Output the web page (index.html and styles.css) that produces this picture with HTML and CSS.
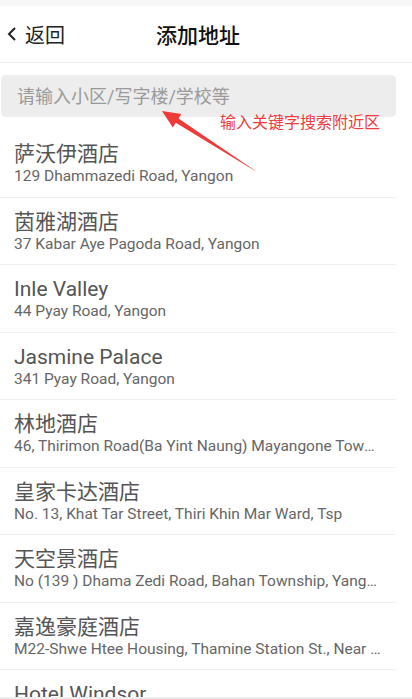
FILE: index.html
```html
<!DOCTYPE html>
<html lang="zh-CN">

<head>
    <meta charset="UTF-8">
    <meta name="viewport" content="width=device-width, initial-scale=1.0">
    <title>添加地址</title>
    <link rel="stylesheet" href="styles.css">
</head>

<body>
    <div class="page">
        <div class="status"></div>
        <!-- 顶部导航 -->
        <div class="header">
            <a class="back" href="#">
                <svg width="12" height="16" viewBox="0 0 12 16"><polyline points="9,2 3,8 9,14" fill="none" stroke="#222" stroke-width="2"/></svg>
                <span>返回</span>
            </a>
            <h1 class="title">添加地址</h1>
        </div>

        <!-- 搜索框 -->
        <div class="search">
            <input type="text" placeholder="请输入小区/写字楼/学校等">
        </div>

        <!-- 地址列表 -->
        <ul class="list">
            <li>
                <p class="name">萨沃伊酒店</p>
                <p class="addr">129 Dhammazedi Road, Yangon</p>
            </li>
            <li>
                <p class="name">茵雅湖酒店</p>
                <p class="addr">37 Kabar Aye Pagoda Road, Yangon</p>
            </li>
            <li>
                <p class="name">Inle Valley</p>
                <p class="addr">44 Pyay Road, Yangon</p>
            </li>
            <li>
                <p class="name">Jasmine Palace</p>
                <p class="addr">341 Pyay Road, Yangon</p>
            </li>
            <li>
                <p class="name">林地酒店</p>
                <p class="addr">46, Thirimon Road(Ba Yint Naung) Mayangone Township, Yangon</p>
            </li>
            <li>
                <p class="name">皇家卡达酒店</p>
                <p class="addr">No. 13, Khat Tar Street, Thiri Khin Mar Ward, Tsp</p>
            </li>
            <li>
                <p class="name">天空景酒店</p>
                <p class="addr">No (139 ) Dhama Zedi Road, Bahan Township, Yangon</p>
            </li>
            <li>
                <p class="name">嘉逸豪庭酒店</p>
                <p class="addr">M22-Shwe Htee Housing, Thamine Station St., Near the Station</p>
            </li>
            <li>
                <p class="name">Hotel Windsor</p>
                <p class="addr">31 Shwe Li Road, Yangon</p>
            </li>
        </ul>
        <div class="bottom"></div>

        <!-- 标注 -->
        <p class="tip">输入关键字搜索附近区</p>
        <svg class="arrow" width="412" height="200" viewBox="0 0 412 200">
            <polygon points="257,172 178.5,118.6 181.4,114 162,111 172.8,127.4 175.8,122.8" fill="#f03a3a"/>
        </svg>
    </div>
</body>

</html>
```

FILE: styles.css
```css
* {
    margin: 0;
    padding: 0;
}

ul {
    list-style: none;
}

body {
    font-family: Roboto, "Noto Sans CJK SC", sans-serif;
    background-color: #fff;
}

.page {
    width: 412px;
    height: 699px;
    overflow: hidden;
    position: relative;
    display: flex;
    flex-direction: column;
}

.status {
    height: 6px;
    background-color: #f7f7f7;
    flex-shrink: 0;
}

.header {
    height: 56px;
    border-bottom: 1px solid #eee;
    display: flex;
    align-items: center;
    justify-content: center;
    position: relative;
    flex-shrink: 0;
}

.back {
    position: absolute;
    left: 6px;
    top: 0;
    height: 56px;
    display: flex;
    align-items: center;
    gap: 7px;
    color: #222;
    font-size: 20px;
    text-decoration: none;
}

.title {
    font-size: 21px;
    font-weight: 500;
    color: #111;
    margin-left: -16px;
}

.search {
    width: 396px;
    padding: 12px 0 0 1px;
    box-sizing: border-box;
    flex-shrink: 0;
}

.search input {
    width: 100%;
    height: 42px;
    border: none;
    border-radius: 5px;
    background-color: #ededed;
    padding-left: 16px;
    box-sizing: border-box;
    font-family: Roboto, "Noto Sans CJK SC", sans-serif;
    font-size: 18px;
    outline: none;
}

.search input::placeholder {
    color: #9a9a9a;
}

.list {
    width: 396px;
    margin-top: 13px;
    flex: 1;
    overflow: hidden;
}

.list li {
    height: 67.5px;
    padding: 12px 14px 0 14px;
    box-sizing: border-box;
    border-bottom: 1px solid #f0f0f0;
}

.name {
    font-size: 21px;
    line-height: 25px;
    color: #555;
}

.addr {
    font-size: 15.5px;
    line-height: 18px;
    color: #666;
    white-space: nowrap;
    overflow: hidden;
    text-overflow: ellipsis;
}

.bottom {
    height: 2px;
    background-color: #ececec;
    flex-shrink: 0;
}

.tip {
    position: absolute;
    left: 220px;
    top: 113px;
    font-size: 16px;
    line-height: 20px;
    color: #f23b3b;
}

.arrow {
    position: absolute;
    left: 0;
    top: 0;
}
```
